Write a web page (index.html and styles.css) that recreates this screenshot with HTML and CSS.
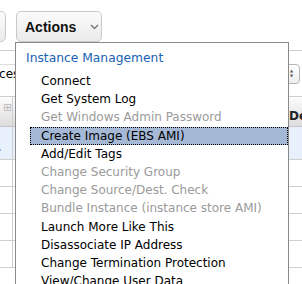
FILE: index.html
```html
<!DOCTYPE html>
<html lang="en">
<head>
  <meta charset="UTF-8" />
  <title>Actions menu</title>
  <link rel="stylesheet" href="styles.css">
</head>
<body>
  <div class="toolbar">
    <button class="btn btn-prev" type="button"></button>
    <button class="btn btn-actions" type="button">Actions <svg class="chev" width="9" height="6" viewBox="0 0 9 6"><polyline points="1,1 4.5,4.5 8,1" fill="none" stroke="#777" stroke-width="1.4"/></svg></button>
  </div>

  <div class="filterbar">
    <div class="select-left">Instances</div>
    <div class="select-right"><span class="arrows">&#9650;<br>&#9660;</span></div>
  </div>

  <div class="grid">
    <div class="grid-head"><span class="col-icon">&#8862;</span><span></span><span class="col-desc">Description</span></div>
    <div class="grid-row selected"><span class="mark">&#9656;</span></div>
    <div class="grid-row"></div>
    <div class="grid-row"></div>
    <div class="grid-row"></div>
    <div class="grid-row"></div>
  </div>

  <div class="menu" role="menu">
    <div class="menu-title">Instance Management</div>
    <ul class="menu-list">
      <li class="item">Connect</li>
      <li class="item">Get System Log</li>
      <li class="item disabled">Get Windows Admin Password</li>
      <li class="item active">Create Image (EBS AMI)</li>
      <li class="item">Add/Edit Tags</li>
      <li class="item disabled">Change Security Group</li>
      <li class="item disabled">Change Source/Dest. Check</li>
      <li class="item disabled">Bundle Instance (instance store AMI)</li>
      <li class="item">Launch More Like This</li>
      <li class="item">Disassociate IP Address</li>
      <li class="item">Change Termination Protection</li>
      <li class="item">View/Change User Data</li>
    </ul>
  </div>
</body>
</html>
```

FILE: styles.css
```css
:root {
  --line: #cfcfcf; --menu-border: #8a8a8a; --blue: #1a62b4;
  --muted: #9a9a9a; --hl: #a5b9d6; --row-sel: #e8f0fc;
}
html, body { overflow: hidden; }
body { margin: 0; background: #fff; font-family: "DejaVu Sans", Verdana, sans-serif; position: relative; height: 284px; width: 302px; }

/* Toolbar */
.toolbar { display: flex; gap: 10px; padding-top: 11px; height: 31px; margin-left: -90px; }
.btn { height: 31px; box-sizing: border-box; border: 1px solid #c9c9c9; border-radius: 5px;
  background: linear-gradient(#fbfbfb, #ebebeb); font-family: "Liberation Sans", Arial, sans-serif;
  font-weight: 700; font-size: 14px; color: #111; padding: 0; flex: none; }
.btn-prev { width: 96px; }
.btn-actions { width: 86px; display: flex; align-items: center; padding-left: 8px; }
.chev { margin-left: 14px; }

/* Filter bar */
.filterbar { border-top: 1px solid var(--line); margin-top: 8px; height: 46px; display: flex;
  justify-content: space-between; align-items: center; box-sizing: border-box; }
.select-left { margin-left: -42px; font-size: 12px; height: 18px; line-height: 18px; border-top: 1px solid #ddd; padding: 0 4px; }
.select-right { width: 24px; height: 18px; margin-right: 2px; border: 1px solid #b5b5b5; border-radius: 4px;
  background: linear-gradient(#fff, #eee); position: relative; }
.arrows { position: absolute; left: 15px; top: 3px; font-size: 4px; line-height: 5px; color: #555; }

/* Grid */
.grid { border-top: 1px solid var(--line); position: relative; }
.grid::before { content: ""; position: absolute; left: 12px; top: 0; bottom: 0; width: 1px; background: var(--line); }
.grid-head { height: 29px; background: linear-gradient(#fdfdfd, #dcdcdc); border-bottom: 1px solid #c4c4c4;
  display: grid; grid-template-columns: 12px 277px auto; align-items: end; font-size: 12px; font-weight: 700; }
.col-icon { color: #bbb; font-weight: 400; font-size: 11px; margin: 0 0 12px 3px; align-self: start; margin-top: 4px; }
.col-desc { padding-bottom: 3px; color: #222; white-space: nowrap; }
.grid-row { height: 26px; border-bottom: 1px solid var(--line); }
.grid-row.selected { height: 32px; background: var(--row-sel); }
.mark { font-size: 8px; color: #223; position: relative; top: 10px; left: -3px; }

/* Dropdown menu */
.menu { position: absolute; left: 15px; top: 42px; width: 272px; height: 260px; background: #fff;
  border: 1px solid var(--menu-border); }
.menu-title { color: var(--blue); font-size: 12.3px; padding: 8px 0 0 10px; height: 24px; box-sizing: border-box; }
.menu-list { list-style: none; margin: 0; padding: 5px 0 0 14px; }
.item { font-size: 12px; line-height: 18.2px; height: 18.2px; padding-left: 11px; color: #000; white-space: nowrap; box-sizing: border-box; }
.item.disabled { color: var(--muted); }
.item.active { background: var(--hl); outline: 1px dotted #000; outline-offset: -1px; }
```
